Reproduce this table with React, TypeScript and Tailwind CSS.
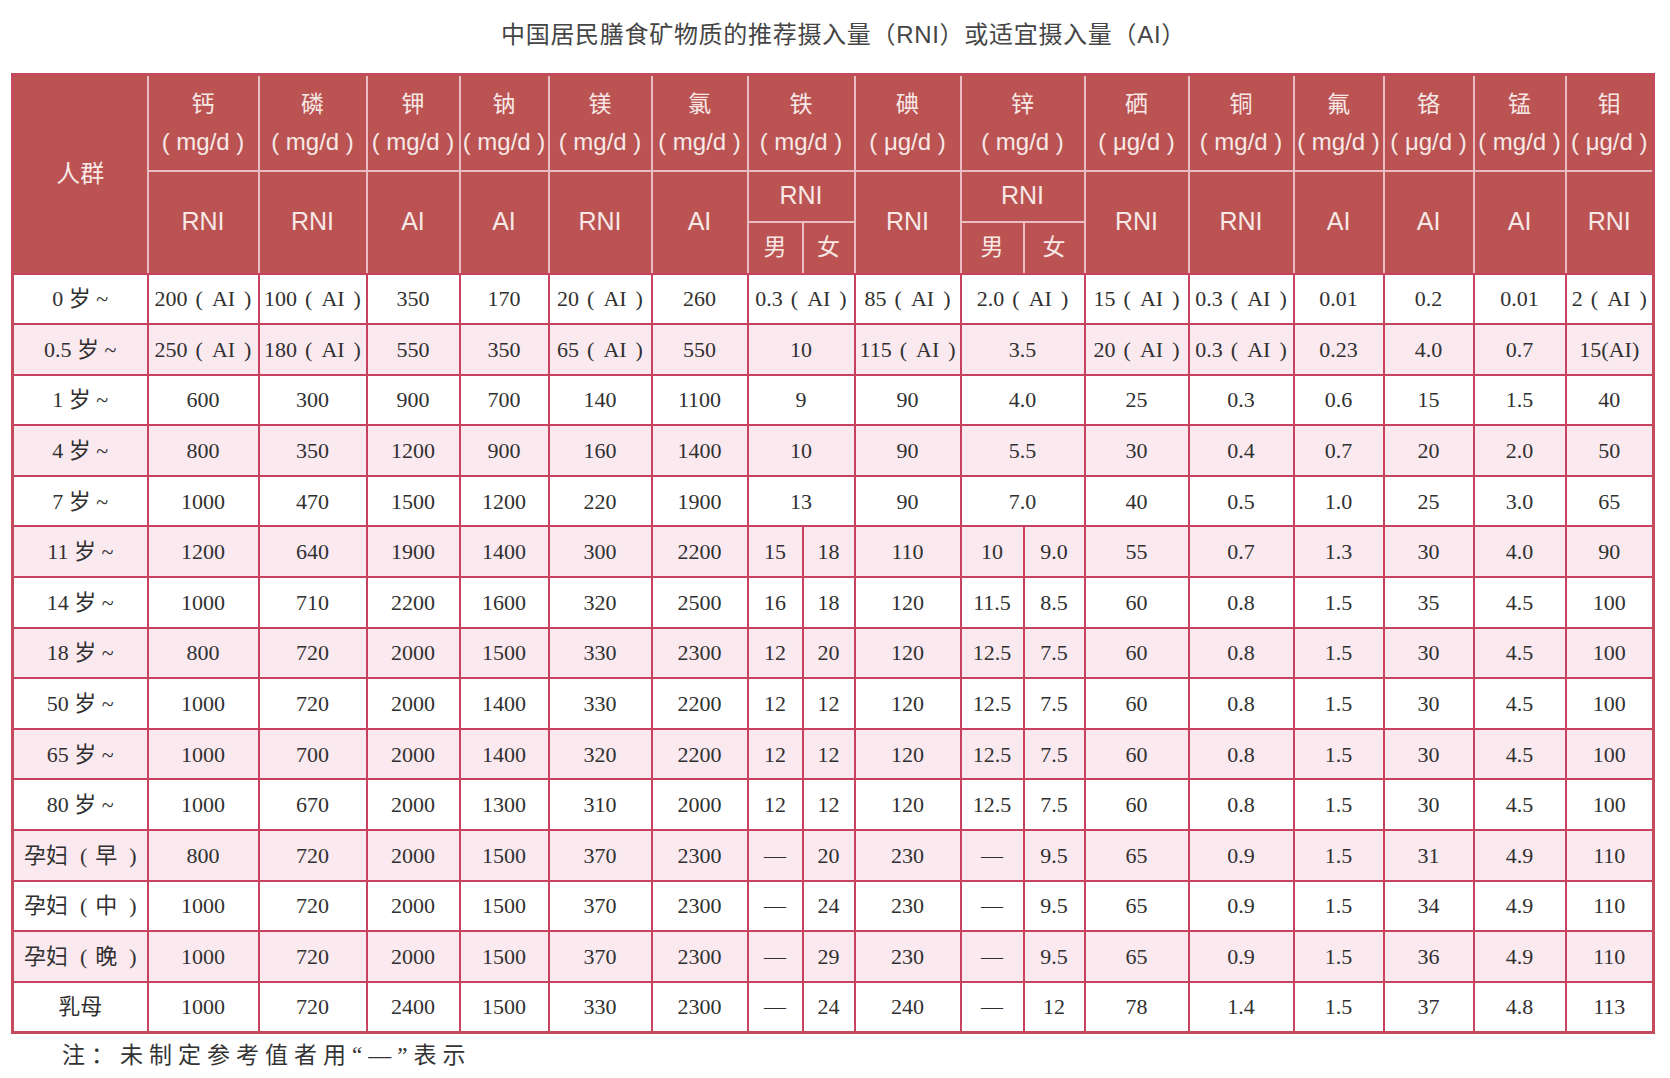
import { type ReactNode } from "react";

type Cell = string | [string, string];

const colWidths = [135, 111, 108, 93, 89, 103, 96, 55, 52, 106, 63, 61, 104, 105, 90, 90, 92, 88];

const elements = [
  { name: "钙", unit: "mg/d", std: "RNI" },
  { name: "磷", unit: "mg/d", std: "RNI" },
  { name: "钾", unit: "mg/d", std: "AI" },
  { name: "钠", unit: "mg/d", std: "AI" },
  { name: "镁", unit: "mg/d", std: "RNI" },
  { name: "氯", unit: "mg/d", std: "AI" },
  { name: "铁", unit: "mg/d", std: "RNI", split: true },
  { name: "碘", unit: "μg/d", std: "RNI" },
  { name: "锌", unit: "mg/d", std: "RNI", split: true },
  { name: "硒", unit: "μg/d", std: "RNI" },
  { name: "铜", unit: "mg/d", std: "RNI" },
  { name: "氟", unit: "mg/d", std: "AI" },
  { name: "铬", unit: "μg/d", std: "AI" },
  { name: "锰", unit: "mg/d", std: "AI" },
  { name: "钼", unit: "μg/d", std: "RNI" },
];

const rows: { label: string; values: Cell[] }[] = [
  { label: "0 岁 ~", values: ["200（AI）", "100（AI）", "350", "170", "20（AI）", "260", "0.3（AI）", "85（AI）", "2.0（AI）", "15（AI）", "0.3（AI）", "0.01", "0.2", "0.01", "2（AI）"] },
  { label: "0.5 岁 ~", values: ["250（AI）", "180（AI）", "550", "350", "65（AI）", "550", "10", "115（AI）", "3.5", "20（AI）", "0.3（AI）", "0.23", "4.0", "0.7", "15(AI)"] },
  { label: "1 岁 ~", values: ["600", "300", "900", "700", "140", "1100", "9", "90", "4.0", "25", "0.3", "0.6", "15", "1.5", "40"] },
  { label: "4 岁 ~", values: ["800", "350", "1200", "900", "160", "1400", "10", "90", "5.5", "30", "0.4", "0.7", "20", "2.0", "50"] },
  { label: "7 岁 ~", values: ["1000", "470", "1500", "1200", "220", "1900", "13", "90", "7.0", "40", "0.5", "1.0", "25", "3.0", "65"] },
  { label: "11 岁 ~", values: ["1200", "640", "1900", "1400", "300", "2200", ["15", "18"], "110", ["10", "9.0"], "55", "0.7", "1.3", "30", "4.0", "90"] },
  { label: "14 岁 ~", values: ["1000", "710", "2200", "1600", "320", "2500", ["16", "18"], "120", ["11.5", "8.5"], "60", "0.8", "1.5", "35", "4.5", "100"] },
  { label: "18 岁 ~", values: ["800", "720", "2000", "1500", "330", "2300", ["12", "20"], "120", ["12.5", "7.5"], "60", "0.8", "1.5", "30", "4.5", "100"] },
  { label: "50 岁 ~", values: ["1000", "720", "2000", "1400", "330", "2200", ["12", "12"], "120", ["12.5", "7.5"], "60", "0.8", "1.5", "30", "4.5", "100"] },
  { label: "65 岁 ~", values: ["1000", "700", "2000", "1400", "320", "2200", ["12", "12"], "120", ["12.5", "7.5"], "60", "0.8", "1.5", "30", "4.5", "100"] },
  { label: "80 岁 ~", values: ["1000", "670", "2000", "1300", "310", "2000", ["12", "12"], "120", ["12.5", "7.5"], "60", "0.8", "1.5", "30", "4.5", "100"] },
  { label: "孕妇（早）", values: ["800", "720", "2000", "1500", "370", "2300", ["—", "20"], "230", ["—", "9.5"], "65", "0.9", "1.5", "31", "4.9", "110"] },
  { label: "孕妇（中）", values: ["1000", "720", "2000", "1500", "370", "2300", ["—", "24"], "230", ["—", "9.5"], "65", "0.9", "1.5", "34", "4.9", "110"] },
  { label: "孕妇（晚）", values: ["1000", "720", "2000", "1500", "370", "2300", ["—", "29"], "230", ["—", "9.5"], "65", "0.9", "1.5", "36", "4.9", "110"] },
  { label: "乳母", values: ["1000", "720", "2400", "1500", "330", "2300", ["—", "24"], "240", ["—", "12"], "78", "1.4", "1.5", "37", "4.8", "113"] },
];

const sans = "font-['Liberation_Sans','Noto_Sans_CJK_SC',sans-serif]";
const serif = "font-['Liberation_Serif','Noto_Sans_CJK_SC',serif]";

// header cells: pale pink rules; the ones sitting on the body get the red rule
const th = "border-2 border-[#ebbcc3] bg-[#ba5352] p-0 text-center align-middle font-normal text-[#f8e8e6]";
const thBottom = "border-b-[#c8415f]";
const td = "border-2 border-[#c8415f] p-0 text-center align-middle";

// the print sets "（ ）" as loose half-width brackets
function renderValue(v: string): ReactNode {
  const m = v.match(/^(.*)（(.+)）$/);
  if (!m) return v;
  return (
    <>
      {m[1]}
      <span className="ml-[8px]">(</span>
      <span className="mx-[9px]">{m[2]}</span>)
    </>
  );
}

function renderLabel(v: string): ReactNode {
  const m = v.match(/^(.*)（(.+)）$/);
  if (!m) return v;
  return (
    <>
      {m[1]}
      <span className="ml-[12px]">(</span>
      <span className="ml-[8px] mr-[12px]">{m[2]}</span>)
    </>
  );
}

export default function App() {
  return (
    <div className="min-h-screen bg-white pt-[20px]">
      <h1 className={`h-[30px] w-[1669px] pl-[18px] text-center text-[24px] leading-[30px] tracking-[0.7px] text-[#454545] ${sans}`}>
        中国居民膳食矿物质的推荐摄入量（RNI）或适宜摄入量（AI）
      </h1>

      <table className="ml-[11px] mt-[23px] w-[1642px] table-fixed border-collapse border-[3px] border-[#c44a5e]">
        <colgroup>
          {colWidths.map((w, i) => (
            <col key={i} style={{ width: w }} />
          ))}
        </colgroup>
        <thead className={sans}>
          <tr className="h-[96px]">
            <th rowSpan={3} className={`${th} ${thBottom} text-[24px]`}>
              人群
            </th>
            {elements.map((el) => (
              <th key={el.name} colSpan={el.split ? 2 : 1} className={th}>
                <div className="text-[23px] leading-[37px]">{el.name}</div>
                <div className="whitespace-nowrap text-[24px] leading-[37px]">( {el.unit} )</div>
              </th>
            ))}
          </tr>
          <tr className="h-[51px]">
            {elements.map((el) =>
              el.split ? (
                <th key={el.name} colSpan={2} className={`${th} text-[25px]`}>
                  {el.std}
                </th>
              ) : (
                <th key={el.name} rowSpan={2} className={`${th} ${thBottom} text-[25px]`}>
                  {el.std}
                </th>
              )
            )}
          </tr>
          <tr className="h-[52px]">
            {["铁", "锌"].flatMap((k) => [
              <th key={`${k}-m`} className={`${th} ${thBottom} text-[23px]`}>
                男
              </th>,
              <th key={`${k}-f`} className={`${th} ${thBottom} text-[23px]`}>
                女
              </th>,
            ])}
          </tr>
        </thead>
        <tbody className={`${serif} text-[22px] text-[#303030]`}>
          {rows.map((row, r) => (
            <tr key={row.label} className={`h-[50.6px] ${r % 2 === 1 ? "bg-[#fbe9f0]" : "bg-white"}`}>
              <td className={`${td} whitespace-nowrap`}>{renderLabel(row.label)}</td>
              {row.values.map((v, i) =>
                Array.isArray(v) ? (
                  [
                    <td key={`${i}-a`} className={td}>
                      {v[0]}
                    </td>,
                    <td key={`${i}-b`} className={td}>
                      {v[1]}
                    </td>,
                  ]
                ) : (
                  <td key={i} colSpan={elements[i].split ? 2 : 1} className={`${td} whitespace-nowrap`}>
                    {renderValue(v)}
                  </td>
                )
              )}
            </tr>
          ))}
        </tbody>
      </table>

      <p className={`ml-[62px] mt-[8px] text-[23px] leading-[28px] tracking-[6px] text-[#333] ${serif}`}>
        注：未制定参考值者用“—”表示
      </p>
    </div>
  );
}
